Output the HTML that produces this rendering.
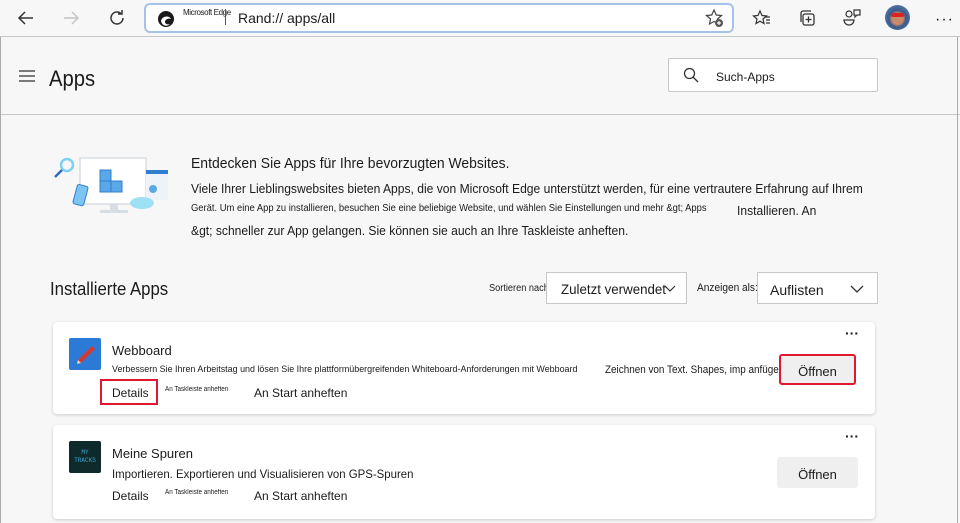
<!DOCTYPE html>
<html><head><meta charset="utf-8"><style>
*{margin:0;padding:0;box-sizing:border-box}
body{width:960px;height:523px;overflow:hidden;background:#f7f7f7;font-family:"Liberation Sans",sans-serif;color:#1b1b1b;position:relative}
.a{position:absolute;white-space:nowrap}
.top{position:absolute;left:0;top:0;width:960px;height:37px;background:#f7f7f7;border-bottom:1px solid #c8c8c8}
.url{position:absolute;left:144px;top:3px;width:590px;height:30px;background:#fff;border:2px solid #a6c2ea;border-radius:6px}
.card{position:absolute;left:53px;width:822px;background:#fff;border-radius:4px;box-shadow:0 1px 3px rgba(0,0,0,.18)}
.btn{position:absolute;background:#efefef;border-radius:3px;font-size:13px;text-align:center}
.sel{position:absolute;background:#fff;border:1px solid #c8c8c8;height:32px;font-size:14px}
</style></head><body>
<div class="top"></div>
<svg class="a" style="left:16px;top:8px" width="20" height="20" viewBox="0 0 20 20"><path d="M17 10H3M9 4L3 10l6 6" fill="none" stroke="#333" stroke-width="1.5"/></svg>
<svg class="a" style="left:61px;top:8px" width="20" height="20" viewBox="0 0 20 20"><path d="M3 10h14M11 4l6 6-6 6" fill="none" stroke="#c4c4c4" stroke-width="1.5"/></svg>
<svg class="a" style="left:107px;top:8px" width="20" height="20" viewBox="0 0 20 20"><path d="M16 10a6 6 0 1 1-2-4.5M15 2v4h-4" fill="none" stroke="#333" stroke-width="1.5"/></svg>
<div class="url"></div>
<svg class="a" style="left:157px;top:10px" width="18" height="18" viewBox="0 0 18 18"><circle cx="9" cy="9" r="8" fill="#1a1a1a"/><path d="M4 11c1-5 8-6 10-2-2-1-6 0-6 3 0 2 3 3 5 2-3 3-8 2-9-3z" fill="#fff"/></svg>
<div class="a" style="left:183px;top:8px;font-size:8px;letter-spacing:-.4px">Microsoft Edge</div>
<div class="a" style="left:225px;top:9px;width:1px;height:16px;background:#555"></div>
<div class="a" style="left:238px;top:10px;font-size:14px">Rand://</div>
<div class="a" style="left:287px;top:10px;font-size:14px">apps/all</div>
<svg class="a" style="left:704px;top:8px" width="20" height="20" viewBox="0 0 20 20"><path d="M10 2l2.3 5 5.2.5-4 3.5 1 5L10 13.5 5.5 16l1-5-4-3.5L7.7 7z" fill="none" stroke="#444" stroke-width="1.2"/><circle cx="15" cy="15" r="4" fill="#555"/><path d="M13 15h4M15 13v4" stroke="#fff" stroke-width="1.2"/></svg>
<svg class="a" style="left:752px;top:8px" width="20" height="20" viewBox="0 0 20 20"><path d="M8 3l2 4.5 4.5.5-3.5 3 1 4.5-4-2.3-4 2.3 1-4.5-3.5-3 4.5-.5z" fill="none" stroke="#333" stroke-width="1.2"/><path d="M13 9h5M14 12h4M14 15h4" stroke="#333" stroke-width="1.2"/></svg>
<svg class="a" style="left:797px;top:8px" width="20" height="20" viewBox="0 0 20 20"><rect x="6" y="6" width="11" height="11" rx="2" fill="none" stroke="#333" stroke-width="1.3"/><path d="M4 14V5a2 2 0 0 1 2-2h8M11.5 8.5v6M8.5 11.5h6" fill="none" stroke="#333" stroke-width="1.3"/></svg>
<svg class="a" style="left:842px;top:7px" width="20" height="20" viewBox="0 0 20 20"><circle cx="7" cy="7" r="3" fill="none" stroke="#333" stroke-width="1.2"/><path d="M2 13h10a5 5 0 0 1-10 0zM12 3h6v5h-3l-2 2V8h-1z" fill="none" stroke="#333" stroke-width="1.2"/></svg>
<div class="a" style="left:885px;top:5px;width:25px;height:25px;border-radius:50%;background:radial-gradient(circle at 50% 55%,#c98a6a 0 30%,#3a5a8a 45%,#6a8ac0 100%)"></div>
<div class="a" style="left:891px;top:13px;width:13px;height:4px;background:#d22;border-radius:2px"></div>
<div class="a" style="left:935px;top:11px;font-size:16px;letter-spacing:1px">···</div>
<div class="a" style="left:0;top:114px;width:960px;height:1px;background:#c8c8c8"></div>
<div class="a" style="left:0;top:37px;width:1px;height:486px;background:#aaa"></div>
<div class="a" style="left:957px;top:37px;width:1px;height:486px;background:#aaa"></div>
<svg class="a" style="left:18px;top:69px" width="18" height="14" viewBox="0 0 18 14"><path d="M1 2h16M1 7h16M1 12h16" stroke="#333" stroke-width="1.3"/></svg>
<div class="a" style="left:49px;top:66px;font-size:22px;transform:scaleX(.92);transform-origin:left">Apps</div>
<div class="a" style="left:668px;top:58px;width:210px;height:34px;background:#fff;border:1px solid #c8c8c8;border-radius:2px"></div>
<svg class="a" style="left:683px;top:67px" width="16" height="16" viewBox="0 0 16 16"><circle cx="6.5" cy="6.5" r="5" fill="none" stroke="#333" stroke-width="1.3"/><path d="M10 10l5 5" stroke="#333" stroke-width="1.3"/></svg>
<div class="a" style="left:716px;top:70px;font-size:12px">Such-Apps</div>
<svg class="a" style="left:45px;top:155px" width="130" height="60" viewBox="0 0 130 60">
<rect x="35" y="3" width="66" height="46" fill="#fff" stroke="#d8dde4" stroke-width="1.5"/><rect x="65" y="49" width="8" height="6" fill="#d8dde4"/><rect x="55" y="55" width="28" height="3" fill="#d8dde4"/>
<rect x="55" y="15" width="11" height="11" fill="#5aa9e6" stroke="#2f7fd0"/><rect x="55" y="26" width="11" height="11" fill="#5aa9e6" stroke="#2f7fd0"/><rect x="66" y="26" width="11" height="11" fill="#5aa9e6" stroke="#2f7fd0"/>
<circle cx="22" cy="10" r="6" fill="none" stroke="#7fd0f5" stroke-width="2.5"/><path d="M17 15l-7 7" stroke="#2f6fc0" stroke-width="2.5"/>
<rect x="30" y="30" width="11" height="20" rx="2" transform="rotate(15 35 40)" fill="#7cc4f2" stroke="#2f7fd0"/>
<rect x="101" y="15" width="22" height="30" fill="#eef3fa"/><rect x="101" y="15" width="22" height="4" fill="#2f7fd0"/>
<ellipse cx="97" cy="48" rx="12" ry="6" fill="#9ee0f5"/><circle cx="108" cy="34" r="4" fill="#5aa9e6"/>
</svg>
<div class="a" style="left:191px;top:155px;font-size:15px;transform:scaleX(.93);transform-origin:left">Entdecken Sie Apps für Ihre bevorzugten Websites.</div>
<div class="a" style="left:191px;top:181px;font-size:13px;transform:scaleX(.93);transform-origin:left">Viele Ihrer Lieblingswebsites bieten Apps, die von Microsoft Edge unterstützt werden, für eine vertrautere Erfahrung auf Ihrem</div>
<div class="a" style="left:191px;top:203px;font-size:10px;transform:scaleX(.94);transform-origin:left">Gerät. Um eine App zu installieren, besuchen Sie eine beliebige Website, und wählen Sie Einstellungen und mehr &amp;gt; Apps</div>
<div class="a" style="left:737px;top:203px;font-size:13px;transform:scaleX(.93);transform-origin:left">Installieren. An</div>
<div class="a" style="left:191px;top:223px;font-size:13px;transform:scaleX(.93);transform-origin:left">&amp;gt; schneller zur App gelangen. Sie können sie auch an Ihre Taskleiste anheften.</div>
<div class="a" style="left:50px;top:279px;font-size:18px;transform:scaleX(.93);transform-origin:left">Installierte Apps</div>
<div class="a" style="left:489px;top:283px;font-size:10px;transform:scaleX(.92);transform-origin:left">Sortieren nach:</div>
<div class="sel" style="left:546px;top:272px;width:141px"><span class="a" style="left:14px;top:8px;transform:scaleX(.95);transform-origin:left">Zuletzt verwendet</span><svg class="a" style="left:117px;top:10px" width="12" height="10" viewBox="0 0 12 10"><path d="M1 3l5 5 5-5" fill="none" stroke="#333" stroke-width="1.2"/></svg></div>
<div class="a" style="left:697px;top:282px;font-size:11px;transform:scaleX(.92);transform-origin:left">Anzeigen als:</div>
<div class="sel" style="left:757px;top:272px;width:121px"><span class="a" style="left:12px;top:9px">Auflisten</span><svg class="a" style="left:92px;top:11px" width="14" height="10" viewBox="0 0 14 10"><path d="M1 2l6 6 6-6" fill="none" stroke="#333" stroke-width="1.3"/></svg></div>
<div class="card" style="top:322px;height:92px"></div>
<div class="a" style="left:69px;top:338px;width:32px;height:32px;background:#2b7bd6;border-radius:2px"></div>
<svg class="a" style="left:72px;top:340px" width="28" height="28" viewBox="0 0 28 28"><path d="M6 20L20 6l3 3L9 23z" fill="#d63a2f"/><path d="M6 20l3 3-4 1z" fill="#f3d0b0"/></svg>
<div class="a" style="left:112px;top:343px;font-size:13px">Webboard</div>
<div class="a" style="left:112px;top:364px;font-size:9.5px;transform:scaleX(.94);transform-origin:left">Verbessern Sie Ihren Arbeitstag und lösen Sie Ihre plattformübergreifenden Whiteboard-Anforderungen mit Webboard</div>
<div class="a" style="left:605px;top:364px;font-size:11px;transform:scaleX(.9);transform-origin:left">Zeichnen von Text. Shapes, imp anfügen</div>
<div class="a" style="left:100px;top:379px;width:58px;height:26px;border:2px solid #e0182d"></div>
<div class="a" style="left:112px;top:386px;font-size:12px">Details</div>
<div class="a" style="left:165px;top:386px;font-size:7px;transform:scaleX(.9);transform-origin:left">An Taskleiste anheften</div>
<div class="a" style="left:254px;top:386px;font-size:12px">An Start anheften</div>
<div class="a" style="left:845px;top:325px;font-size:14px;font-weight:bold">···</div>
<div class="btn" style="left:779px;top:354px;width:77px;height:31px;border:2px solid #e0182d;padding-top:8px">Öffnen</div>
<div class="card" style="top:425px;height:94px"></div>
<div class="a" style="left:69px;top:441px;width:32px;height:32px;background:#0e2a2a;border-radius:2px;font-family:'Liberation Mono',monospace;font-size:6px;color:#37a3d6;text-align:center;line-height:8px;padding-top:8px">MY<br>TRACKS</div>
<div class="a" style="left:112px;top:446px;font-size:13px">Meine Spuren</div>
<div class="a" style="left:112px;top:467px;font-size:12px;transform:scaleX(.95);transform-origin:left">Importieren. Exportieren und Visualisieren von GPS-Spuren</div>
<div class="a" style="left:112px;top:489px;font-size:12px">Details</div>
<div class="a" style="left:165px;top:489px;font-size:7px;transform:scaleX(.9);transform-origin:left">An Taskleiste anheften</div>
<div class="a" style="left:254px;top:489px;font-size:12px">An Start anheften</div>
<div class="a" style="left:845px;top:428px;font-size:14px;font-weight:bold">···</div>
<div class="btn" style="left:777px;top:457px;width:81px;height:31px;padding-top:10px">Öffnen</div>
</body></html>
